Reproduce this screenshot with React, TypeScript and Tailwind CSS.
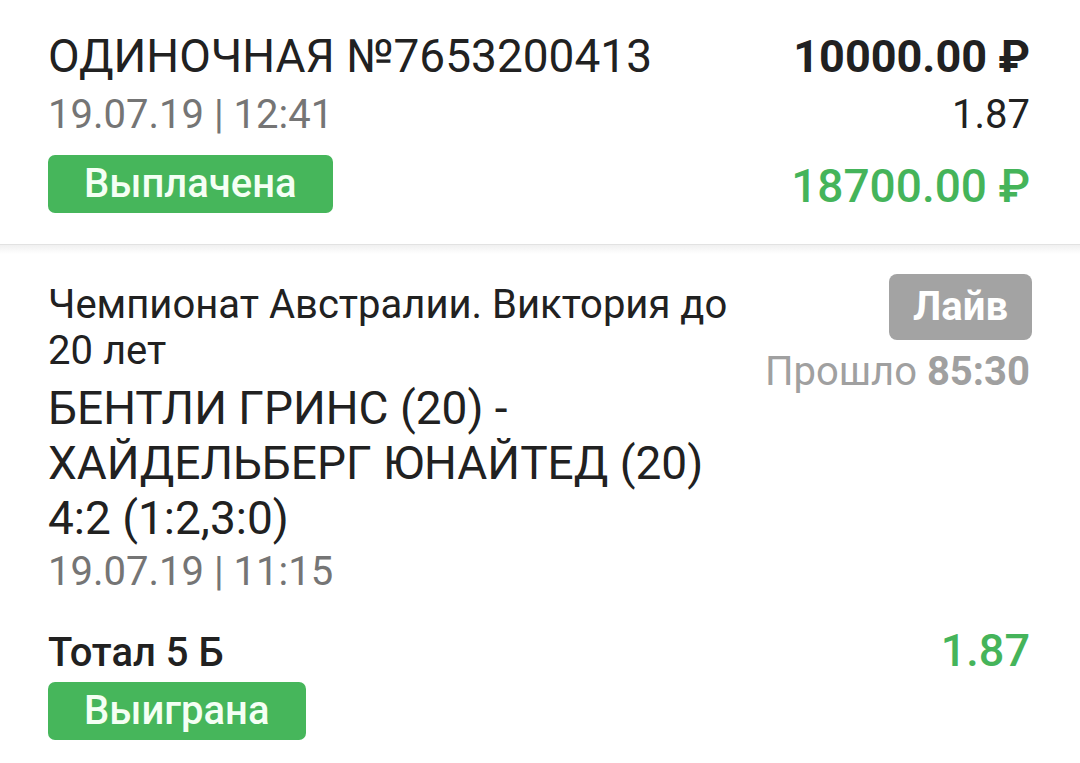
const GREEN = "text-[#45b45a]";

function Pill({ label, tone }: { label: string; tone: "green" | "gray" }) {
  return (
    <span
      className={
        tone === "green"
          ? "inline-flex h-[58px] items-center rounded-[7px] bg-[#46b65b] px-[36px] text-[40px] font-medium leading-none text-[#f4fff4]"
          : "inline-flex h-[66px] items-center rounded-[8px] bg-[#a3a3a3] px-[24px] text-[40px] font-bold leading-none text-white"
      }
    >
      {label}
    </span>
  );
}

export default function App() {
  return (
    <div className="h-[763px] w-[1080px] overflow-hidden bg-white font-['Roboto',sans-serif] text-[#212121]">
      {/* bet header */}
      <section className="relative border-b border-[#e2e2e2] px-[48px] pb-[30px] pr-[50px] pt-[28px]">
        <div className="flex items-baseline justify-between leading-[56px]">
          <span className="text-[46px]">ОДИНОЧНАЯ №7653200413</span>
          <span className="text-[45px] font-bold">10000.00 ₽</span>
        </div>
        <div className="mt-[6px] flex items-baseline justify-between text-[40px] leading-[48px]">
          <span className="text-[#757575]">19.07.19 | 12:41</span>
          <span>1.87</span>
        </div>
        <div className="mt-[15px] flex items-center justify-between">
          <Pill label="Выплачена" tone="green" />
          <span className={`mt-[4px] text-[46px] font-medium leading-[56px] ${GREEN}`}>18700.00 ₽</span>
        </div>
        <div className="pointer-events-none absolute inset-x-0 -bottom-[10px] h-[9px] bg-gradient-to-b from-[#f0f0f0] to-white" />
      </section>

      {/* event */}
      <section className="px-[48px] pr-[48px] pt-[29px]">
        <div className="flex items-start justify-between">
          <div className="mt-[8px] min-w-0 max-w-[700px]">
            <div className="text-[40px] leading-[46px]">Чемпионат Австралии. Виктория до 20 лет</div>
            <div className="mt-[7px] text-[46px] leading-[55px]">
              БЕНТЛИ ГРИНС (20) -<br />
              ХАЙДЕЛЬБЕРГ ЮНАЙТЕД (20)<br />
              4:2 (1:2,3:0)
            </div>
            <div className="mt-[2px] text-[40px] leading-[48px] text-[#757575]">19.07.19 | 11:15</div>
          </div>
          <div className="flex flex-col items-end">
            <Pill label="Лайв" tone="gray" />
            <div className="mt-[8px] pr-[2px] text-[40px] leading-[48px] text-[#a0a0a0]">
              Прошло <span className="font-bold">85:30</span>
            </div>
          </div>
        </div>

        <div className="mt-[31px] flex items-baseline justify-between pr-[2px]">
          <span className="text-[40px] font-medium leading-[48px]">Тотал 5 Б</span>
          <span className={`text-[45px] font-medium leading-[48px] ${GREEN}`}>1.87</span>
        </div>
        <div className="mt-[5px]">
          <Pill label="Выиграна" tone="green" />
        </div>
      </section>
    </div>
  );
}
